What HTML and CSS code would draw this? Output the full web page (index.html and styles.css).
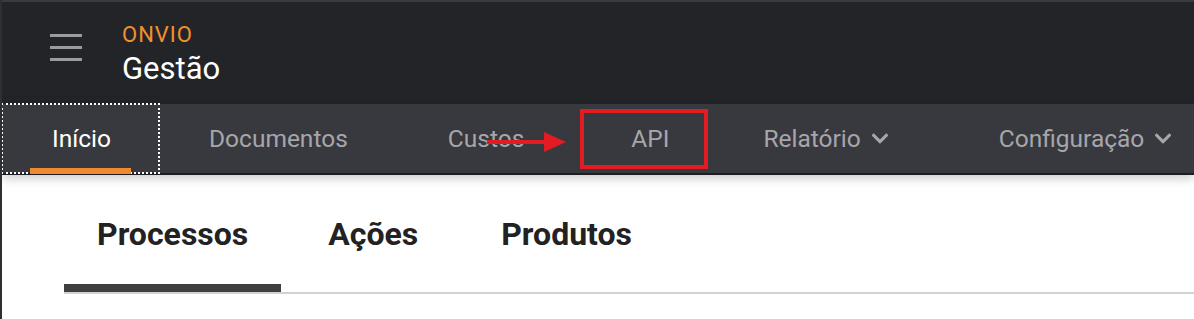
FILE: index.html
```html
<!DOCTYPE html>
<html lang="pt-BR">
<head>
<meta charset="UTF-8">
<meta name="viewport" content="width=device-width, initial-scale=1.0">
<title>Onvio Gestão</title>
<link rel="stylesheet" href="styles.css">
</head>
<body>
<header class="topbar">
  <button class="menu-btn" aria-label="Menu">
    <span></span><span></span><span></span>
  </button>
  <div class="brand">
    <div class="brand-name">ONVIO</div>
    <div class="brand-product">Gestão</div>
  </div>
</header>

<nav class="mainnav">
  <a class="nav-item active" href="#">Início</a>
  <a class="nav-item" href="#">Documentos</a>
  <a class="nav-item" href="#">Custos</a>
  <a class="nav-item nav-api" href="#">API</a>
  <a class="nav-item nav-report" href="#">Relatório
    <svg class="chevron" viewBox="8 120 432 272"><path d="M207.029 381.476L12.686 187.132c-9.373-9.373-9.373-24.569 0-33.941l22.667-22.667c9.357-9.357 24.522-9.375 33.901-.04L224 284.505l154.745-154.021c9.379-9.335 24.544-9.317 33.901.04l22.667 22.667c9.373 9.373 9.373 24.569 0 33.941L240.971 381.476c-9.373 9.372-24.569 9.372-33.942 0z"/></svg>
  </a>
  <a class="nav-item" href="#">Configuração
    <svg class="chevron" viewBox="8 120 432 272"><path d="M207.029 381.476L12.686 187.132c-9.373-9.373-9.373-24.569 0-33.941l22.667-22.667c9.357-9.357 24.522-9.375 33.901-.04L224 284.505l154.745-154.021c9.379-9.335 24.544-9.317 33.901.04l22.667 22.667c9.373 9.373 9.373 24.569 0 33.941L240.971 381.476c-9.373 9.372-24.569 9.372-33.942 0z"/></svg>
  </a>

  <!-- annotation: arrow + highlight box -->
  <svg class="note-arrow" viewBox="0 0 80 21">
    <line x1="0" y1="10" x2="62" y2="10" stroke="#e31b23" stroke-width="4"/>
    <polygon points="57,0 79,10 57,20" fill="#e31b23"/>
  </svg>
  <div class="note-box"></div>
</nav>

<main class="content">
  <ul class="tabs">
    <li class="tab active">Processos</li>
    <li class="tab">Ações</li>
    <li class="tab">Produtos</li>
  </ul>
</main>
</body>
</html>
```

FILE: styles.css
```css
body {
  margin: 0;
  border-left: 2px solid #2e2f33;
  font-family: Roboto, "Noto Sans", sans-serif;
  background-color: #fff;
  min-height: 319px;
}
.topbar {
  display: flex;
  align-items: flex-start;
  height: 82px;
  padding: 20px 0 0 48px;
  background-color: #232428;
  border-top: 2px solid #3a3b3f;
}
.menu-btn {
  display: flex;
  flex-direction: column;
  gap: 9px;
  width: 32px;
  margin-top: 12px;
  padding: 0;
  background: none;
  border: none;
}
.menu-btn span {
  display: block;
  height: 3px;
  background-color: #9a9aa0;
}
.brand {
  margin-left: 40px;
}
.brand-name {
  color: #f2902f;
  font-size: 22px;
  line-height: 26px;
  letter-spacing: 1px;
}
.brand-product {
  margin-top: 3px;
  color: #fff;
  font-size: 31px;
  line-height: 36px;
}
.mainnav {
  position: relative;
  z-index: 1;
  display: flex;
  height: 69px;
  background-color: #38393e;
  border-bottom: 2px solid #1d1e21;
  box-shadow: 0 3px 10px rgba(0, 0, 0, 0.22);
}
.nav-item {
  position: relative;
  display: flex;
  align-items: center;
  gap: 11px;
  padding: 0 50px;
  color: #a6a6ab;
  font-size: 24.5px;
  text-decoration: none;
}
.nav-item.active {
  padding: 0 48px 0 50px;
  color: #fff;
  outline: 2px dotted #fff;
  outline-offset: -1px;
}
.nav-item.active::after {
  content: "";
  position: absolute;
  left: 28px;
  right: 28px;
  bottom: -1px;
  height: 6px;
  background-color: #f08a30;
}
.nav-api {
  padding: 0 44px 0 57px;
}
.nav-report {
  padding-right: 61px;
}
.chevron {
  width: 16px;
  height: 11px;
  fill: #a6a6ab;
}
.note-arrow {
  position: absolute;
  left: 485px;
  top: 28px;
  width: 80px;
  height: 21px;
}
.note-box {
  position: absolute;
  left: 578px;
  top: 5px;
  width: 120px;
  height: 52px;
  border: 4px solid #e31b23;
}
.content {
  padding: 39px 0 0 62px;
}
.tabs {
  display: flex;
  gap: 14px;
  margin: 0;
  padding: 0;
  list-style: none;
  border-bottom: 2px solid #d2d2d2;
}
.tab {
  padding: 0 33px 30px;
  color: #222;
  font-size: 32px;
  font-weight: 700;
  line-height: 40px;
  border-bottom: 8px solid transparent;
}
.tab + .tab {
  padding-right: 36px;
}
.tab.active {
  border-bottom-color: #3f3f41;
}
```
